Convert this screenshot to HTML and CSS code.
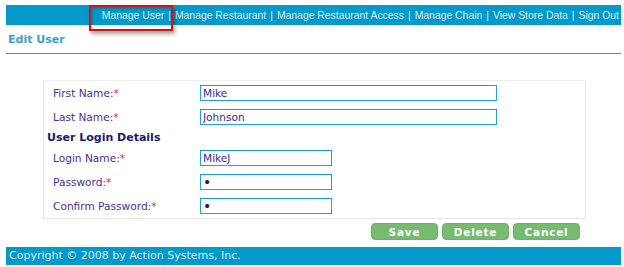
FILE: index.html
```html
<!DOCTYPE html>
<html lang="en">
<head>
  <meta charset="UTF-8">
  <title>Edit User</title>
  <link rel="stylesheet" href="styles.css">
</head>
<body>
<div class="page">
  <div class="topbar">
    <a href="#">Manage User</a><span class="sep">|</span>
    <a href="#">Manage Restaurant</a><span class="sep">|</span>
    <a href="#">Manage Restaurant Access</a><span class="sep">|</span>
    <a href="#">Manage Chain</a><span class="sep">|</span>
    <a href="#">View Store Data</a><span class="sep">|</span>
    <a href="#">Sign Out</a>
    <div class="highlight"></div>
  </div>
  <h1 class="title">Edit User</h1>
  <form class="user-form">
    <div class="row">
      <label>First Name:<span class="req">*</span></label>
      <input type="text" class="wide" value="Mike">
    </div>
    <div class="row">
      <label>Last Name:<span class="req">*</span></label>
      <input type="text" class="wide" value="Johnson">
    </div>
    <div class="section">User Login Details</div>
    <div class="row">
      <label>Login Name:<span class="req">*</span></label>
      <input type="text" class="short" value="MikeJ">
    </div>
    <div class="row">
      <label>Password:<span class="req">*</span></label>
      <input type="password" class="short" value="x">
    </div>
    <div class="row">
      <label>Confirm Password:<span class="req">*</span></label>
      <input type="password" class="short" value="x">
    </div>
  </form>
  <div class="actions">
    <button type="button">Save</button>
    <button type="button">Delete</button>
    <button type="button">Cancel</button>
  </div>
  <div class="footer">Copyright &copy; 2008 by Action Systems, Inc.</div>
</div>
</body>
</html>
```

FILE: styles.css
```css
body {
  margin: 0;
  background: #fff;
  font-family: "DejaVu Sans", Verdana, sans-serif;
}
.page {
  width: 615px;
  margin-left: 6px;
  padding-top: 5px;
}
.topbar {
  position: relative;
  height: 20px;
  background-color: #0399cb;
  display: flex;
  justify-content: flex-end;
  align-items: center;
  padding-right: 2px;
  font-family: "Liberation Sans", Arial, sans-serif;
  font-size: 10.4px;
  color: #dcedf6;
}
.topbar a {
  color: #dcedf6;
  text-decoration: none;
}
.topbar .sep {
  margin: 0 4px;
}
.highlight {
  position: absolute;
  left: 83px;
  top: 0;
  width: 80px;
  height: 22px;
  border: 2px solid #c8161d;
  box-shadow: 2px 3px 4px rgba(0,0,0,0.35), inset 1px 1px 3px rgba(0,0,0,0.25);
}
.title {
  margin: 0;
  padding: 8px 0 7px 2px;
  font-size: 11px;
  line-height: 13px;
  font-weight: bold;
  color: #3a9fd0;
  border-bottom: 1px solid #1aa3da;
}
.user-form {
  margin: 26px 0 0 37px;
  width: 541px;
  border: 1px solid #e6e6e6;
  border-top-color: #efefef;
}
.row {
  display: flex;
  align-items: center;
  height: 24px;
}
.row label {
  width: 147px;
  padding-left: 9px;
  font-size: 10.6px;
  color: #4a2f93;
}
.req {
  color: #e8282c;
}
.section {
  height: 17px;
  line-height: 17px;
  padding-left: 3px;
  font-size: 11px;
  font-weight: bold;
  color: #1b1a6b;
}
.row input {
  box-sizing: border-box;
  height: 16px;
  margin: 0;
  padding: 0 2px;
  border: 1px solid #22a2d8;
  border-top-color: #1b98cf;
  font-family: "DejaVu Sans", Verdana, sans-serif;
  font-size: 10.6px;
  color: #3a2b8f;
  outline: none;
}
.row input[type="password"] {
  font-size: 14px;
  color: #1b1a6b;
}
.row input.wide {
  width: 297px;
}
.row input.short {
  width: 132px;
}
.actions {
  display: flex;
  justify-content: flex-end;
  gap: 4px;
  width: 574px;
  margin-top: 4px;
}
.actions button {
  width: 67px;
  height: 17px;
  padding: 0;
  border: 1px solid #6fb26a;
  border-radius: 4px;
  background-color: #76bb70;
  color: #fff;
  font-family: "DejaVu Sans", Verdana, sans-serif;
  font-size: 10.5px;
  font-weight: bold;
  letter-spacing: 0.8px;
  cursor: pointer;
}
.footer {
  margin-top: 7px;
  height: 18px;
  line-height: 18px;
  padding-left: 3px;
  background-color: #0399cb;
  color: #d6ebf5;
  font-size: 11px;
}
```
